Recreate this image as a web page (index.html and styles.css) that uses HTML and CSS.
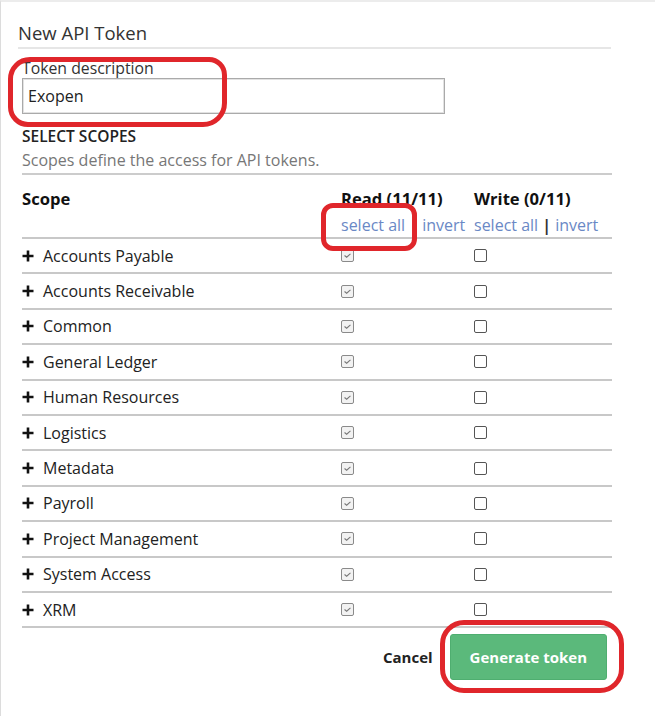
FILE: index.html
```html
<!DOCTYPE html>
<html>
<head>
<meta charset="utf-8">
<link rel="stylesheet" href="styles.css">
</head>
<body>
<div class="panel">
  <h1 class="title">New API Token</h1>
  <div class="rule"></div>
  <div class="form">
    <label class="label">Token description</label>
    <div class="input">Exopen</div>
    <div class="section">SELECT SCOPES</div>
    <div class="hint">Scopes define the access for API tokens.</div>
    <div class="table">
      <div class="row head">
        <div class="c-scope"><b>Scope</b></div>
        <div class="c-read"><b>Read (11/11)</b><div class="links"><a>select all</a> <b class="sep">|</b> <a>invert</a></div></div>
        <div class="c-write"><b>Write (0/11)</b><div class="links"><a>select all</a> <b class="sep">|</b> <a>invert</a></div></div>
      </div>
      <div class="row"><div class="c-scope"><svg class="plus" viewBox="0 0 12 12"><path d="M6 0.5V11.5M0.5 6H11.5"/></svg>Accounts Payable</div><div class="c-read"><span class="cb on"><svg viewBox="0 0 13 13"><path d="M3 6.5L5.5 8.5L10 4.5"/></svg></span></div><div class="c-write"><span class="cb"></span></div></div>
      <div class="row"><div class="c-scope"><svg class="plus" viewBox="0 0 12 12"><path d="M6 0.5V11.5M0.5 6H11.5"/></svg>Accounts Receivable</div><div class="c-read"><span class="cb on"><svg viewBox="0 0 13 13"><path d="M3 6.5L5.5 8.5L10 4.5"/></svg></span></div><div class="c-write"><span class="cb"></span></div></div>
      <div class="row"><div class="c-scope"><svg class="plus" viewBox="0 0 12 12"><path d="M6 0.5V11.5M0.5 6H11.5"/></svg>Common</div><div class="c-read"><span class="cb on"><svg viewBox="0 0 13 13"><path d="M3 6.5L5.5 8.5L10 4.5"/></svg></span></div><div class="c-write"><span class="cb"></span></div></div>
      <div class="row"><div class="c-scope"><svg class="plus" viewBox="0 0 12 12"><path d="M6 0.5V11.5M0.5 6H11.5"/></svg>General Ledger</div><div class="c-read"><span class="cb on"><svg viewBox="0 0 13 13"><path d="M3 6.5L5.5 8.5L10 4.5"/></svg></span></div><div class="c-write"><span class="cb"></span></div></div>
      <div class="row"><div class="c-scope"><svg class="plus" viewBox="0 0 12 12"><path d="M6 0.5V11.5M0.5 6H11.5"/></svg>Human Resources</div><div class="c-read"><span class="cb on"><svg viewBox="0 0 13 13"><path d="M3 6.5L5.5 8.5L10 4.5"/></svg></span></div><div class="c-write"><span class="cb"></span></div></div>
      <div class="row"><div class="c-scope"><svg class="plus" viewBox="0 0 12 12"><path d="M6 0.5V11.5M0.5 6H11.5"/></svg>Logistics</div><div class="c-read"><span class="cb on"><svg viewBox="0 0 13 13"><path d="M3 6.5L5.5 8.5L10 4.5"/></svg></span></div><div class="c-write"><span class="cb"></span></div></div>
      <div class="row"><div class="c-scope"><svg class="plus" viewBox="0 0 12 12"><path d="M6 0.5V11.5M0.5 6H11.5"/></svg>Metadata</div><div class="c-read"><span class="cb on"><svg viewBox="0 0 13 13"><path d="M3 6.5L5.5 8.5L10 4.5"/></svg></span></div><div class="c-write"><span class="cb"></span></div></div>
      <div class="row"><div class="c-scope"><svg class="plus" viewBox="0 0 12 12"><path d="M6 0.5V11.5M0.5 6H11.5"/></svg>Payroll</div><div class="c-read"><span class="cb on"><svg viewBox="0 0 13 13"><path d="M3 6.5L5.5 8.5L10 4.5"/></svg></span></div><div class="c-write"><span class="cb"></span></div></div>
      <div class="row"><div class="c-scope"><svg class="plus" viewBox="0 0 12 12"><path d="M6 0.5V11.5M0.5 6H11.5"/></svg>Project Management</div><div class="c-read"><span class="cb on"><svg viewBox="0 0 13 13"><path d="M3 6.5L5.5 8.5L10 4.5"/></svg></span></div><div class="c-write"><span class="cb"></span></div></div>
      <div class="row"><div class="c-scope"><svg class="plus" viewBox="0 0 12 12"><path d="M6 0.5V11.5M0.5 6H11.5"/></svg>System Access</div><div class="c-read"><span class="cb on"><svg viewBox="0 0 13 13"><path d="M3 6.5L5.5 8.5L10 4.5"/></svg></span></div><div class="c-write"><span class="cb"></span></div></div>
      <div class="row"><div class="c-scope"><svg class="plus" viewBox="0 0 12 12"><path d="M6 0.5V11.5M0.5 6H11.5"/></svg>XRM</div><div class="c-read"><span class="cb on"><svg viewBox="0 0 13 13"><path d="M3 6.5L5.5 8.5L10 4.5"/></svg></span></div><div class="c-write"><span class="cb"></span></div></div>
    </div>
    <div class="actions">
      <span class="cancel">Cancel</span>
      <span class="btn">Generate token</span>
    </div>
  </div>
  <div class="mark mark-desc"></div>
  <div class="mark mark-select"></div>
  <div class="mark mark-btn"></div>
</div>
</body>
</html>
```

FILE: styles.css
```css
html, body { margin: 0; padding: 0; background: #fff; }
body { font-family: "Open Sans", "Noto Sans", sans-serif; color: #222; }
.panel {
  position: relative;
  height: 716px;
  border-top: 2px solid #ececec;
  border-left: 1px solid #dcdcdc;
  box-sizing: border-box;
  padding-left: 17px;
}
.title {
  margin: 0;
  padding-top: 19px;
  font-size: 18.5px;
  font-weight: 400;
  line-height: 24px;
  color: #333;
}
.rule { width: 593px; height: 2px; background: #e6e6e6; margin-top: 2px; }
.form { padding-left: 4px; width: 590px; }
.label { display: block; font-size: 15.8px; line-height: 20px; margin-top: 9px; color: #333; }
.input {
  width: 423px; height: 36px; box-sizing: border-box;
  border: 1px solid #aaa; box-shadow: inset 0 0 0 1px #e2e2e2;
  margin-top: 0; padding: 6px 5px; font-size: 16px; line-height: 22px; color: #222;
}
.section { margin-top: 12px; font-size: 15.5px; line-height: 20px; font-weight: 600; color: #222; }
.hint { margin-top: 4px; font-size: 16px; line-height: 20px; color: #777; }
.table { margin-top: 3px; border-top: 2px solid #ccc; }
.row { display: flex; height: 35.4px; border-bottom: 2px solid #c8c8c8; box-sizing: border-box; align-items: center; font-size: 16px; }
.row.head { height: 64px; align-items: flex-start; padding-top: 13px; }
.c-scope { width: 319px; display: flex; align-items: center; }
.c-read { width: 133px; }
.c-write { flex: 1; }
.head b { font-weight: 700; font-size: 16.6px; line-height: 22px; color: #111; }
.links { margin-top: 4px; font-size: 16px; line-height: 21px; }
.links a { color: #6a88c5; }
.head .links .sep { color: #333; font-size: 16px; }
.plus { width: 12px; height: 12px; margin-right: 9px; }
.plus path { stroke: #111; stroke-width: 2.6; fill: none; }
.cb {
  display: block; width: 13px; height: 13px; box-sizing: border-box;
  border: 1px solid #555; border-radius: 2px; background: #fff;
}
.cb.on { border-color: #8a8a8a; background: #f2f2f2; }
.cb svg { display: block; width: 11px; height: 11px; }
.cb path { stroke: #777; stroke-width: 1.3; fill: none; }
.actions { display: flex; justify-content: flex-end; align-items: center; margin-top: 6px; padding-right: 5px; }
.cancel { font-weight: 700; font-size: 15px; margin-right: 17px; color: #222; }
.btn {
  display: inline-block; background: #5bb97b; color: #fff; font-weight: 700; font-size: 15px;
  padding: 0 19px; height: 44px; line-height: 44px; border-radius: 3px; border: 1px solid #4fae70;
}
.mark { position: absolute; border: 5px solid #e0262b; border-radius: 22px; box-sizing: border-box; }
.mark-desc { left: 7px; top: 55px; width: 219px; height: 70px; border-radius: 22px 18px 24px 20px; }
.mark-select { left: 320px; top: 201px; width: 96px; height: 48px; border-radius: 12px; }
.mark-btn { left: 439px; top: 618px; width: 184px; height: 73px; border-radius: 24px; }
```
